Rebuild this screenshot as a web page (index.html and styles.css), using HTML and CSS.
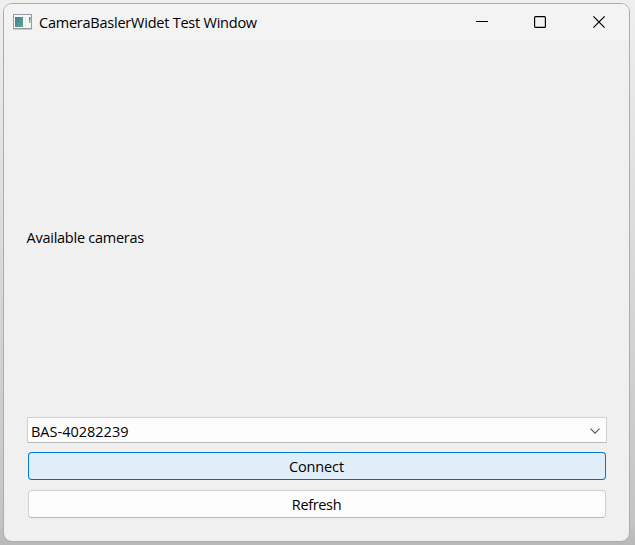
FILE: index.html
```html
<!DOCTYPE html>
<html lang="en">
<head>
<meta charset="utf-8">
<title>CameraBaslerWidet Test Window</title>
<link rel="stylesheet" href="styles.css">
</head>
<body>
<main class="window">
  <header class="titlebar">
    <svg class="app-icon" width="19" height="16" viewBox="0 0 19 16">
      <defs>
        <linearGradient id="pane" x1="0" y1="0" x2="1" y2="1">
          <stop offset="0" stop-color="#3f78a4"/>
          <stop offset="1" stop-color="#5aae78"/>
        </linearGradient>
      </defs>
      <rect x=".5" y=".5" width="18" height="14" fill="#f8f8f8" stroke="#959aa3"/>
      <path d="M0 15.500h19" stroke="#c5cbd5"/>
      <rect x="2" y="3" width="8" height="10" fill="url(#pane)"/>
      <path d="M12.5 3v10" stroke="#e9e9e9"/>
      <rect x="16" y="3" width="1.5" height="3" fill="#4b86a8"/>
      <rect x="16" y="6" width="1.5" height="3" fill="#72b890"/>
    </svg>
    <h1 class="title">CameraBaslerWidet Test Window</h1>
    <div class="controls">
      <svg width="12" height="12" viewBox="0 0 12 12"><path d="M0 5.500h12" stroke="#000"/></svg>
      <svg width="12" height="12" viewBox="0 0 12 12"><rect x=".6" y=".6" width="10.8" height="10.8" rx="1" fill="none" stroke="#000" stroke-width="1.2"/></svg>
      <svg width="12" height="12" viewBox="0 0 12 12"><path d="M.4.4l11.2 11.2M11.6.4L.4 11.6" stroke="#000" stroke-width="1.2"/></svg>
    </div>
  </header>
  <section class="content">
    <div class="label">Available cameras</div>
    <div class="combo">
      <span class="combo-text">BAS-40282239</span>
      <svg width="10" height="6" viewBox="0 0 10 6"><path d="M.5.6L5 5.1 9.5.6" fill="none" stroke="#505050" stroke-width="1.1"/></svg>
    </div>
    <button class="button button-default">Connect</button>
    <button class="button button-refresh">Refresh</button>
  </section>
</main>
</body>
</html>
```
FILE: styles.css
```css
* {
  box-sizing: border-box;
}

body {
  margin: 0;
  height: 545px;
  padding: 3px 5px 3px 3px;
  overflow: hidden;
  background: linear-gradient(#efefef, #d8d8d8 50%, #c4c4c4 96%, #b8b8b8);
  font-family: "Open Sans", "Noto Sans", sans-serif;
  font-size: 14.5px;
  color: #000;
}

.window {
  display: flex;
  flex-direction: column;
  height: 539px;
  border: 1px solid #acacac;
  border-radius: 9px;
  background: #f0f0f0;
  overflow: hidden;
}

.titlebar {
  display: flex;
  flex: none;
  align-items: center;
  height: 37px;
  padding: 0 24px 0 9px;
  background: #f3f3f3;
}

.app-icon {
  margin-top: -1px;
}

.title {
  margin: 0 0 0 7px;
  font-size: 14.5px;
  font-weight: 400;
  line-height: 20px;
  letter-spacing: -0.23px;
  white-space: nowrap;
}

.controls {
  display: flex;
  gap: 47px;
  margin: -1px 0 0 auto;
}

.controls svg {
  display: block;
}

.controls svg:nth-child(2) {
  margin-left: -1px;
}

.content {
  display: flex;
  flex-direction: column;
  flex: 1;
  padding: 17px 22px 23px 23px;
}

.label {
  display: flex;
  flex: 1;
  align-items: center;
  margin-left: -0.5px;
  line-height: 20px;
  letter-spacing: -0.25px;
}

.combo {
  display: flex;
  flex: none;
  align-items: center;
  justify-content: space-between;
  height: 26px;
  margin-bottom: 9px;
  padding: 2px 6px 0 3px;
  border: 1px solid #d0d0d0;
  border-bottom-color: #b8b8b8;
  border-radius: 1px;
  background: #fdfdfd;
  line-height: 20px;
}

.combo-text {
  padding-top: 2px;
}

.button {
  display: flex;
  flex: none;
  align-items: center;
  justify-content: center;
  height: 28px;
  margin: 0 1px 10px;
  padding: 1px 1px 0 0;
  border: 1px solid #d0d0d0;
  border-bottom-color: #b8b8b8;
  border-radius: 4px;
  background: #fdfdfd;
  color: #000;
  font: inherit;
  line-height: 20px;
  letter-spacing: -0.15px;
}

.button-refresh {
  margin-bottom: 0;
  letter-spacing: -0.35px;
}

.button-default {
  border-color: #0078d4;
  border-bottom-color: #006cbe;
  background: #e0eef9;
}
```
